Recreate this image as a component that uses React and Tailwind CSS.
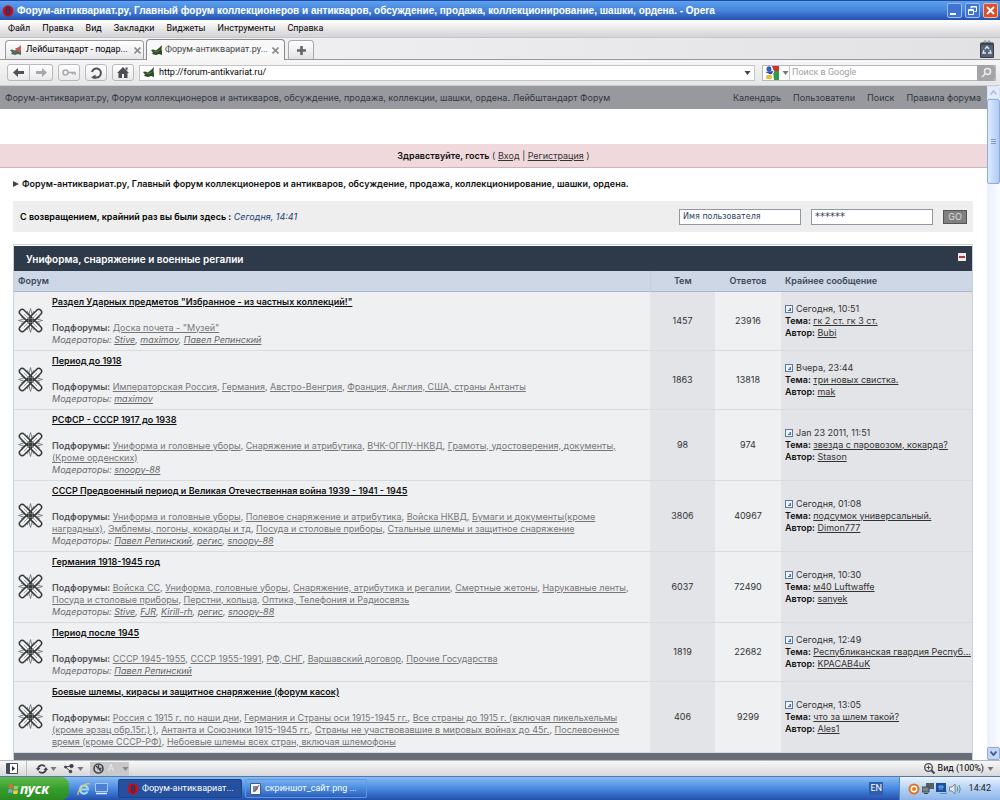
import { useState } from "react";

const title = "Форум-антиквариат.ру, Главный форум коллекционеров и антикваров, обсуждение, продажа, коллекционирование, шашки, ордена.";

const menu = ["Файл", "Правка", "Вид", "Закладки", "Виджеты", "Инструменты", "Справка"];

const forums = [
  {
    name: 'Раздел Ударных предметов "Избранное - из частных коллекций!"',
    subs: ['Доска почета - "Музей"'],
    mods: ["Stive", "maximov", "Павел Репинский"],
    topics: 1457,
    replies: 23916,
    last: { date: "Сегодня, 10:51", topic: "гк 2 ст. гк 3 ст.", author: "Bubi" },
  },
  {
    name: "Период до 1918",
    subs: ["Императорская Россия", "Германия", "Австро-Венгрия", "Франция, Англия, США, страны Антанты"],
    mods: ["maximov"],
    topics: 1863,
    replies: 13818,
    last: { date: "Вчера, 23:44", topic: "три новых свистка.", author: "mak" },
  },
  {
    name: "РСФСР - СССР 1917 до 1938",
    subs: ["Униформа и головные уборы", "Снаряжение и атрибутика", "ВЧК-ОГПУ-НКВД", "Грамоты, удостоверения, документы, (Кроме орденских)"],
    mods: ["snoopy-88"],
    topics: 98,
    replies: 974,
    last: { date: "Jan 23 2011, 11:51", topic: "звезда с паровозом, кокарда?", author: "Stason" },
  },
  {
    name: "СССР Предвоенный период и Великая Отечественная война 1939 - 1941 - 1945",
    subs: ["Униформа и головные уборы", "Полевое снаряжение и атрибутика", "Войска НКВД", "Бумаги и документы(кроме наградных)", "Эмблемы, погоны, кокарды и тд", "Посуда и столовые приборы", "Стальные шлемы и защитное снаряжение"],
    mods: ["Павел Репинский", "регис", "snoopy-88"],
    topics: 3806,
    replies: 40967,
    last: { date: "Сегодня, 01:08", topic: "подсумок универсальный.", author: "Dimon777" },
  },
  {
    name: "Германия 1918-1945 год",
    subs: ["Войска СС", "Униформа, головные уборы", "Снаряжение, атрибутика и регалии", "Смертные жетоны", "Нарукавные ленты", "Посуда и столовые приборы", "Перстни, кольца", "Оптика, Телефония и Радиосвязь"],
    mods: ["Stive", "FJR", "Kirill-rh", "регис", "snoopy-88"],
    topics: 6037,
    replies: 72490,
    last: { date: "Сегодня, 10:30", topic: "м40 Luftwaffe", author: "sanyek" },
  },
  {
    name: "Период после 1945",
    subs: ["СССР 1945-1955", "СССР 1955-1991", "РФ, СНГ", "Варшавский договор", "Прочие Государства"],
    mods: ["Павел Репинский"],
    topics: 1819,
    replies: 22682,
    last: { date: "Сегодня, 12:49", topic: "Республиканская гвардия Респуб...", author: "KPACAB4uK" },
  },
  {
    name: "Боевые шлемы, кирасы и защитное снаряжение (форум касок)",
    subs: ["Россия с 1915 г. по наши дни", "Германия и Страны оси 1915-1945 гг.", "Все страны до 1915 г. (включая пикельхельмы (кроме эрзац обр.15г.) )", "Антанта и Союзники 1915-1945 гг.", "Страны не участвовавшие в мировых войнах до 45г.", "Послевоенное время (кроме СССР-РФ)", "Небоевые шлемы всех стран, включая шлемофоны"],
    mods: [],
    topics: 406,
    replies: 9299,
    last: { date: "Сегодня, 13:05", topic: "что за шлем такой?", author: "Ales1" },
  },
];

function OperaIcon() {
  return (
    <svg width="12" height="12" viewBox="0 0 12 12" className="shrink-0">
      <ellipse cx="6" cy="6" rx="5.4" ry="5.8" fill="#c3111d" />
      <ellipse cx="6" cy="6" rx="2" ry="4" fill="#2c3a76" stroke="#7c0810" strokeWidth="0.6" />
    </svg>
  );
}

function BirdIcon({ red }) {
  return (
    <svg width="12" height="11" viewBox="0 0 12 11" className="shrink-0">
      <path d="M0 5L2 4.500L5 5.500L8 3L11 0L10.500 4L11 7L11 10L8 9L5 10L1 9L2 7.500Z" fill={red ? "#4c6a5c" : "#2c4a24"} />
      <path d="M3 6.500L6 7L9 5" stroke="#5d7a48" fill="none" />
      {red && <path d="M5 3.500L11 1.500L10 7L7 6Z" fill="#cf5454" />}
    </svg>
  );
}

function ForumStar() {
  return (
    <svg width="25" height="25" viewBox="0 0 25 25" fill="none" className="mx-auto block">
      <g stroke="#74787a" strokeWidth="0.9">
        <path d="M12.500 0.500L14 6L12.500 10L11 6ZM12.500 24.500L14 19L12.500 15L11 19Z" />
        <path d="M0.500 12.500L6 11L10 12.500L6 14ZM24.500 12.500L19 11L15 12.500L19 14Z" />
        <path d="M9 3L12.500 9L16 3M9 22L12.500 16L16 22M3 9L9 12.500L3 16M22 9L16 12.500L22 16" />
      </g>
      <g stroke="#34393a" strokeWidth="1.500">
        <rect x="-2" y="9.700" width="29" height="5.600" rx="2.800" transform="rotate(45 12.500 12.500)" />
        <rect x="-2" y="9.700" width="29" height="5.600" rx="2.800" transform="rotate(-45 12.500 12.500)" />
      </g>
      <path d="M6 6L19 19M19 6L6 19" stroke="#8b8f90" strokeWidth="0.800" />
      <circle cx="12.500" cy="12.500" r="2.200" fill="#3d4332" />
    </svg>
  );
}

function LastPostIcon() {
  return (
    <svg width="8" height="8" viewBox="0 0 8 8" className="mr-[3px] inline-block align-[-1px]">
      <rect x="0.5" y="0.5" width="7" height="7" fill="#eef3f9" stroke="#5d7898" />
      <path d="M6 3V6H3V5H4.500V3Z" fill="#4b6ea8" />
    </svg>
  );
}

function Caret({ className = "text-[#777]" }) {
  return (
    <svg width="7" height="4" viewBox="0 0 7 4" className={`shrink-0 ${className}`}>
      <path d="M0.500 0H6.500L3.500 4Z" fill="currentColor" />
    </svg>
  );
}

function CloseTab() {
  return (
    <button type="button" aria-label="Закрыть вкладку" className="px-[2px]">
      <svg width="7" height="7" viewBox="0 0 7 7" stroke="#8c8c90" strokeWidth="1.600">
        <path d="M0.500 0.500L6.500 6.500M6.500 0.500L0.500 6.500" />
      </svg>
    </button>
  );
}

function ToolButton({ label, children, className = "" }) {
  return (
    <button type="button" aria-label={label} className={`flex h-[17px] items-center justify-center rounded-[3px] border border-[#b9b9bb] bg-linear-to-b from-white to-[#e9e9eb] ${className}`}>
      {children}
    </button>
  );
}

function TitleBar() {
  return (
    <header className="flex h-5 shrink-0 items-center gap-[3px] border-t border-[#1d4ea8] bg-linear-to-b from-[#5e9ff0] via-[#4585da] to-[#2650b0] pr-[2px] pl-[2px]">
      <OperaIcon />
      <h1 className="min-w-0 flex-1 truncate font-['Liberation_Sans',Arial,sans-serif] text-[10px] font-bold text-white">{title} - Opera</h1>
      <div className="flex gap-[3px]">
        <button type="button" aria-label="Свернуть" className="flex h-[15px] w-[15px] items-end rounded-[2px] border border-[#9dbcf0] bg-[#3f74d2] p-[2px]">
          <span className="h-[2px] w-[6px] bg-white" />
        </button>
        <button type="button" aria-label="Восстановить" className="flex h-[15px] w-[15px] items-center justify-center rounded-[2px] border border-[#9dbcf0] bg-[#3f74d2]">
          <svg width="9" height="9" viewBox="0 0 9 9" fill="none" stroke="#fff">
            <path d="M3 2.500V0.500H8.500V5.500H6.500M3 1H8" />
            <path d="M0.500 3.500H5.500V8.500H0.500ZM0.500 4.500H5.500" />
          </svg>
        </button>
        <button type="button" aria-label="Закрыть" className="flex h-[15px] w-[15px] items-center justify-center rounded-[2px] border border-[#f0b8a8] bg-[#d9512c]">
          <svg width="9" height="9" viewBox="0 0 9 9" stroke="#fff" strokeWidth="1.800">
            <path d="M1 1L8 8M8 1L1 8" />
          </svg>
        </button>
      </div>
    </header>
  );
}

function Tabs() {
  return (
    <div className="flex h-[22px] shrink-0 items-end border-b border-[#98989c] bg-linear-to-r from-[#f4f4f5] to-[#e2e2e5] pl-[5px]">
      <div className="flex h-[19px] w-[139px] items-center gap-1 rounded-t-[4px] border border-b-0 border-[#9a9a9e] bg-linear-to-b from-white to-[#e6e6e8] px-1">
        <BirdIcon red />
        <button type="button" className="flex-1 text-left whitespace-nowrap">Лейбштандарт - подар...</button>
        <CloseTab />
      </div>
      <div className="-mb-px ml-[2px] flex h-[21px] w-[139px] items-center gap-[2px] rounded-t-[4px] border border-b-0 border-[#8a8a8e] bg-[#f8f8f9] px-1">
        <BirdIcon />
        <button type="button" className="flex-1 text-left whitespace-nowrap text-[#444]">Форум-антиквариат.ру...</button>
        <CloseTab />
      </div>
      <button type="button" aria-label="Новая вкладка" className="ml-[3px] flex h-[19px] w-[26px] items-center justify-center rounded-t-[4px] border border-b-0 border-[#a8a8ac] bg-linear-to-b from-white to-[#e2e2e4]">
        <svg width="9" height="9" viewBox="0 0 9 9" stroke="#63656d" strokeWidth="2.600">
          <path d="M4.500 0V9M0 4.500H9" />
        </svg>
      </button>
      <button type="button" aria-label="Закрытые вкладки" className="mr-[6px] mb-px ml-auto">
        <svg width="14" height="18" viewBox="0 0 14 18" fill="none">
          <path d="M3 3L5 0.500L7 3L9 0.500L11 3" fill="#d8ece4" stroke="#6f8f92" />
          <path d="M0.500 4H13.500V17.500H0.500Z" fill="#586274" stroke="#363e4c" />
          <path d="M0.500 3.500H13.500" stroke="#363e4c" strokeWidth="2" />
          <path d="M5 9L7 6.500L9 9M10 10L11 13H8M6 13H3L4 10" stroke="#dfe5ee" strokeWidth="1.300" />
        </svg>
      </button>
    </div>
  );
}

function Toolbar() {
  return (
    <div className="flex h-[26px] shrink-0 items-center border-b border-[#cfcfcf] bg-linear-to-b from-[#f6f6f7] to-[#e6e6e8] pr-1 pl-[7px]">
      <ToolButton label="Назад" className="w-[23px] rounded-r-none">
        <svg width="11" height="9" viewBox="0 0 11 9" fill="#505258"><path d="M0 4.500L5 0V3H11V6H5V9Z" /></svg>
      </ToolButton>
      <ToolButton label="Вперед" className="w-[23px] rounded-l-none border-l-0">
        <svg width="11" height="9" viewBox="0 0 11 9" fill="#a6a8ac"><path d="M11 4.500L6 0V3H0V6H6V9Z" /></svg>
      </ToolButton>
      <ToolButton label="Пароль" className="ml-[5px] w-[22px]">
        <svg width="14" height="7" viewBox="0 0 14 7" fill="none" stroke="#a6a8ac" strokeWidth="1.500"><circle cx="3.500" cy="3.500" r="2.500" /><path d="M6 3.500H13V6M10.500 3.500V5.500" /></svg>
      </ToolButton>
      <ToolButton label="Обновить" className="ml-[5px] w-[22px]">
        <svg width="13" height="12" viewBox="0 0 13 12" fill="none" stroke="#4c4e54" strokeWidth="2"><path d="M2 5A4.500 4.500 0 1 1 6.500 10.500H3" /><path d="M5.500 7.500V12L1 10.500Z" fill="#4c4e54" stroke="none" /></svg>
      </ToolButton>
      <ToolButton label="Домой" className="ml-[5px] w-[22px]">
        <svg width="12" height="11" viewBox="0 0 12 11" fill="#4c4e54"><path d="M6 0L12 6H10.500V11H7V7H5V11H1.500V6H0ZM8.500 0.500H10.500V3.500L8.500 2Z" /></svg>
      </ToolButton>
      <div className="ml-[5px] flex h-4 flex-1 items-center gap-1 border border-[#c4c4c6] bg-white px-[3px]">
        <BirdIcon />
        <input aria-label="Адрес" defaultValue="http://forum-antikvariat.ru/" className="min-w-0 flex-1 outline-none" />
        <Caret className="text-[#444]" />
      </div>
      <div className="ml-[7px] flex h-4 w-[234px] items-center border border-[#b8b8ba] bg-white">
        <button type="button" aria-label="Поисковая система" className="flex h-full w-[27px] items-center gap-[3px] border-r border-[#c8c8ca] pl-[2px]">
          <svg width="14" height="14" viewBox="0 0 14 14" className="shrink-0">
            <path d="M7 0H14V5H8Z" fill="#d2322c" /><path d="M8 5H14V14H9Z" fill="#2f9a48" />
            <ellipse cx="4" cy="3" rx="2.500" ry="2.800" fill="#2c5cc0" /><path d="M0 6L8 5L7 9Z" fill="#2456a8" />
            <ellipse cx="4" cy="11" rx="3" ry="2.300" fill="#efbb3d" /><path d="M6 0L9 6L6 9" stroke="#fff" fill="none" />
          </svg>
          <Caret />
        </button>
        <input type="search" aria-label="Поиск" placeholder="Поиск в Google" className="min-w-0 flex-1 pl-[2px] outline-none placeholder:text-[#a0a0a0]" />
        <button type="button" aria-label="Найти" className="flex h-4 w-[18px] items-center justify-center rounded-r-[3px] bg-[#a5a5a7]">
          <svg width="11" height="11" viewBox="0 0 11 11" fill="none" stroke="#eee" strokeWidth="1.500"><circle cx="6.500" cy="4.500" r="3" /><path d="M4.500 6.500L1 10" /></svg>
        </button>
      </div>
    </div>
  );
}

function LinkList({ items, className }) {
  return items.map((item, i) => (
    <span key={item}>
      <a href="#" className={`underline ${className}`}>{item}</a>
      {i < items.length - 1 && ", "}
    </span>
  ));
}

function ForumRow({ forum }) {
  return (
    <tr className="border-b border-[#d9dcdf]">
      <td className="bg-[#eff0f2]"><ForumStar /></td>
      <td className="bg-[#eff0f2] pt-1 pr-2 pb-1 pl-[5px] align-top text-[#6c6c6c]">
        <h3 className="mb-[14px] font-semibold text-[#111]"><a href="#" className="underline">{forum.name}</a></h3>
        <p><b className="font-semibold text-[#555]">Подфорумы:</b> <LinkList items={forum.subs} className="text-[#777]" /></p>
        {forum.mods.length > 0 && (
          <p className="italic">Модераторы: <LinkList items={forum.mods} className="text-[#666]" /></p>
        )}
      </td>
      <td className="bg-[#e3e4e7] text-center">{forum.topics}</td>
      <td className="bg-[#eff0f2] text-center">{forum.replies}</td>
      <td className="bg-[#e3e4e7] pl-1 whitespace-nowrap">
        <p><LastPostIcon />{forum.last.date}</p>
        <p><b className="font-semibold text-[#111]">Тема:</b> <a href="#" className="underline">{forum.last.topic}</a></p>
        <p><b className="font-semibold text-[#111]">Автор:</b> <a href="#" className="underline">{forum.last.author}</a></p>
      </td>
    </tr>
  );
}

function ForumTable() {
  const [open, setOpen] = useState(true);

  return (
    <section className="mt-3 mr-[14px] mb-4 ml-[13px] border border-[#c9d2dd] pt-px">
      <div className="flex h-[25px] items-center justify-between bg-[#2e3a49] pr-[6px] pl-3">
        <h2 className="text-[10px] font-semibold text-white">Униформа, снаряжение и военные регалии</h2>
        <button type="button" aria-label="Свернуть раздел" onClick={() => setOpen(!open)} className="mb-1 flex h-2 w-2 items-center justify-center bg-[#f7e6e6]">
          <span className="h-[2px] w-[6px] bg-[#a04040]" />
        </button>
      </div>
      {open && (
        <table className="w-full table-fixed border-collapse leading-[12px] text-[#333]">
          <colgroup>
            <col className="w-[33px]" />
            <col />
            <col className="w-[65px]" />
            <col className="w-[66px]" />
            <col className="w-[191px]" />
          </colgroup>
          <thead>
            <tr className="h-5 border-b border-[#a9b8cc] bg-[#cdd7e6] text-[#3c4a5c] *:font-semibold">
              <th colSpan={2} className="border-r border-[#c3cedf] pl-1 text-left">Форум</th>
              <th>Тем</th>
              <th>Ответов</th>
              <th className="pl-1 text-left">Крайнее сообщение</th>
            </tr>
          </thead>
          <tbody>
            {forums.map((forum) => <ForumRow key={forum.name} forum={forum} />)}
          </tbody>
        </table>
      )}
      <div className="h-2 bg-[#676e78]" />
    </section>
  );
}

function Page() {
  return (
    <main className="min-w-0 flex-1 overflow-hidden bg-white font-['Inter',Arial,sans-serif] leading-[12px]">
      <nav className="flex h-[23px] items-center gap-3 bg-[#97999f] pr-[6px] pl-[5px] text-[#33363c]">
        <a href="#" className="flex-1 truncate">Форум-антиквариат.ру, Форум коллекционеров и антикваров, обсуждение, продажа, коллекции, шашки, ордена. Лейбштандарт Форум</a>
        <a href="#">Календарь</a>
        <a href="#">Пользователи</a>
        <a href="#">Поиск</a>
        <a href="#">Правила форума</a>
      </nav>
      <div className="mt-[35px] flex h-6 items-center justify-center border-b border-[#d0b4b8] bg-[#f0d9dc] text-[#333]">
        <p><b className="font-semibold text-[#111]">Здравствуйте, гость</b> ( <a href="#" className="underline">Вход</a> | <a href="#" className="underline">Регистрация</a> )</p>
      </div>
      <p className="mt-[10px] flex items-center gap-[3px] pl-[13px] font-semibold text-[#111]">
        <svg width="6" height="6" viewBox="0 0 6 6" fill="#444"><path d="M0 0L6 3L0 6Z" /></svg>
        {title}
      </p>
      <form className="mt-[11px] mr-[14px] ml-[13px] flex h-[31px] items-center bg-[#eeeeee] pr-[6px] pl-[7px]" onSubmit={(e) => e.preventDefault()}>
        <p className="flex-1"><b className="font-semibold">С возвращением, крайний раз вы были здесь :</b> <i className="text-[#22397a]">Сегодня, 14:41</i></p>
        <input aria-label="Имя пользователя" defaultValue="Имя пользователя" className="h-4 w-[122px] border border-[#8f98a3] bg-white px-[3px] font-['DejaVu_Sans',sans-serif] text-[8px] text-[#2d3d5c]" />
        <input aria-label="Пароль" defaultValue="******" className="ml-[10px] h-4 w-[122px] border border-[#8f98a3] bg-white px-[3px] font-['DejaVu_Sans',sans-serif] text-[10px] text-[#2d3d5c]" />
        <button type="submit" className="ml-[10px] h-[14px] w-6 border border-[#555] bg-[#808080] text-center leading-none text-[#ddd]">GO</button>
      </form>
      <ForumTable />
    </main>
  );
}

function Scrollbar() {
  return (
    <div className="flex w-[13px] shrink-0 flex-col bg-linear-to-r from-[#e9f0fc] to-[#fbfcff]">
      <button type="button" aria-label="Вверх" className="flex h-[13px] items-center justify-center rounded-[2px] border border-[#d5e0f4] bg-[#e4edfb]">
        <svg width="7" height="5" viewBox="0 0 7 5" fill="none" stroke="#a9b9d4" strokeWidth="1.500"><path d="M0.500 4.500L3.500 1L6.500 4.500" /></svg>
      </button>
      <div className="flex h-[85px] flex-col items-center justify-center gap-px rounded-[2px] border border-[#8fabd8] bg-linear-to-r from-[#dceafd] to-[#b0cbf3]">
        <span className="h-px w-[5px] bg-[#7d9dcb]" />
        <span className="h-px w-[5px] bg-[#7d9dcb]" />
        <span className="h-px w-[5px] bg-[#7d9dcb]" />
      </div>
      <button type="button" aria-label="Вниз" className="mt-auto flex h-[13px] items-center justify-center rounded-[2px] border border-[#8fabd8] bg-[#c3d6f8]">
        <svg width="7" height="5" viewBox="0 0 7 5" fill="none" stroke="#42587d" strokeWidth="1.800"><path d="M0.500 0.500L3.500 4L6.500 0.500" /></svg>
      </button>
    </div>
  );
}

function StatusBar() {
  return (
    <div className="flex h-4 shrink-0 items-center border-t border-[#b8b8b8] bg-linear-to-b from-[#f8f8f9] to-[#d8d8dc] pr-[6px] pl-[6px]">
      <button type="button" aria-label="Панели" className="mr-2">
        <svg width="12" height="11" viewBox="0 0 12 11"><path d="M0.500 0.500H11.500V10.500H0.500Z" fill="#fff" stroke="#454a5c" /><path d="M1 1H4V10H1Z" fill="#454a5c" /><path d="M6 3L9 5.500L6 8Z" fill="#222" /></svg>
      </button>
      <span className="h-4 w-px bg-[#bbb]" />
      <button type="button" aria-label="Синхронизация" className="ml-[9px] flex items-center gap-[2px]">
        <svg width="12" height="10" viewBox="0 0 12 10" fill="none" stroke="#3f424a" strokeWidth="1.800"><path d="M2 5A4 4 0 0 1 9 2.500M10 5A4 4 0 0 1 3 7.500" /><path d="M0 4H4.500L2 7ZM12 6H7.500L10 3Z" fill="#3f424a" stroke="none" /></svg>
        <Caret />
      </button>
      <button type="button" aria-label="Unite" className="ml-[7px] flex items-center gap-[3px]">
        <svg width="10" height="10" viewBox="0 0 10 10" fill="#3f424a" stroke="#3f424a"><path d="M1.500 3L8 2M1.500 3L7 8" fill="none" /><circle cx="1.500" cy="3" r="1" /><circle cx="7.500" cy="2" r="1.700" /><circle cx="6.500" cy="7.500" r="1.300" /></svg>
        <Caret />
      </button>
      <button type="button" aria-label="Turbo" className="ml-[6px] flex h-[14px] w-[39px] items-center gap-1 bg-[#c9c9cb] pl-[3px] text-[#eee]">
        <svg width="11" height="11" viewBox="0 0 11 11" fill="none" stroke="#42454e" strokeWidth="1.600"><circle cx="5.500" cy="5.500" r="4.500" /><path d="M3 3L8 8M5.500 2V5.500H8.500" strokeWidth="1.300" /></svg>
        A
        <Caret className="ml-auto text-[#888]" />
      </button>
      <button type="button" className="ml-auto flex items-center gap-[3px]">
        <svg width="11" height="11" viewBox="0 0 11 11" fill="none" stroke="#42454e"><circle cx="4.500" cy="4.500" r="3.800" strokeWidth="1.300" /><path d="M2.500 4.500H6.500M4.500 2.500V6.500" /><path d="M7.500 7.500L10.500 10.500" strokeWidth="2" /></svg>
        Вид (100%)
        <Caret />
      </button>
    </div>
  );
}

function Taskbar() {
  return (
    <footer className="flex h-6 shrink-0 items-stretch border-t border-[#5577a8] bg-linear-to-b from-[#86bcf5] via-[#4a8ae0] to-[#2450ac] text-white">
      <button type="button" className="flex w-[69px] items-center gap-px rounded-r-[8px] bg-linear-to-b from-[#5fbb4c] via-[#35a02e] to-[#2b8a22] pl-2 font-['Noto_Sans',sans-serif] text-[14px] leading-none font-bold italic">
        <svg width="11" height="12" viewBox="0 0 11 12"><path d="M1 2Q3 0 5 2L4.500 5.500Q2.500 4.500 0.500 5.500Z" fill="#e8683c" /><path d="M6 2.500Q8 3.500 10.500 2.500L10 6Q7.500 7 5.500 6Z" fill="#8fd06a" /><path d="M0.500 6.500Q2.500 5.500 4.500 6.500L4 10Q2 9 0 10Z" fill="#76a9ee" /><path d="M5.500 7Q7.500 8 10 7L9.500 10.500Q7 11.500 5 10.500Z" fill="#f4cf4f" /></svg>
        пуск
      </button>
      <div className="flex w-[49px] items-center gap-1 pl-2">
        <button type="button" aria-label="Internet Explorer">
          <svg width="14" height="14" viewBox="0 0 14 14" fill="none"><path d="M10.500 9.500A4 4 0 1 1 11 7.500H4" stroke="#9fd8fb" strokeWidth="2.200" /><path d="M1 13C0 8 9 0 13 2" stroke="#e8c85a" strokeWidth="1.300" /></svg>
        </button>
        <button type="button" aria-label="Рабочий стол">
          <svg width="13" height="12" viewBox="0 0 13 12"><path d="M0.500 0.500H12.500V8.500H0.500Z" fill="#4d80d4" stroke="#a9c8f2" /><path d="M1 10.500H12" stroke="#dfeafb" strokeWidth="1.500" /></svg>
        </button>
      </div>
      <button type="button" className="my-[2px] flex w-[124px] items-center gap-[3px] rounded-[2px] border border-[#1c4488] bg-[#24509f] px-2 whitespace-nowrap">
        <OperaIcon />
        Форум-антиквариат...
      </button>
      <button type="button" className="my-[2px] ml-[3px] flex w-[122px] items-center gap-1 rounded-[2px] border border-[#5a98e6] px-1 whitespace-nowrap">
        <svg width="11" height="12" viewBox="0 0 11 12" className="shrink-0"><path d="M0.500 0.500H10.500V11.500H0.500Z" fill="#f3f5f8" stroke="#44597c" /><path d="M3 3H8V6L5 9H3Z" fill="#7089b0" /><path d="M9 2L5 8" stroke="#b44" /></svg>
        скриншот_сайт.png ...
      </button>
      <span className="my-[5px] ml-auto flex items-center bg-[#2f5cab] px-[1px]">EN</span>
      <div className="ml-4 flex w-[101px] items-center gap-[2px] border-l border-[#5d83bd] bg-linear-to-b from-[#eaf3fd] via-[#b6d2f5] to-[#8db5ea] pl-2 text-[#222]">
        <svg width="12" height="12" viewBox="0 0 12 12" fill="none"><circle cx="6" cy="6" r="5.500" fill="#e2731f" /><circle cx="6" cy="6" r="2.700" stroke="#fff" strokeWidth="1.500" /></svg>
        <svg width="12" height="11" viewBox="0 0 12 11"><path d="M4 0H12V6H4Z" fill="#565f69" /><path d="M0 4H7V9H0Z" fill="#7c858e" stroke="#3c444c" /><path d="M2 10.500H6" stroke="#444" /></svg>
        <svg width="11" height="11" viewBox="0 0 11 11"><path d="M0 0H10V9H0Z" fill="#1c4f9e" /><path d="M2 4H8M4 2V7M6 2V7" stroke="#6fb0e8" /><path d="M4 10.500H11V7" stroke="#6a8ba8" fill="none" /></svg>
        <svg width="13" height="12" viewBox="0 0 13 12" fill="none"><path d="M0.500 4H3L6 1V11L3 8H0.500Z" fill="#e8edf2" stroke="#75808c" /><path d="M8 3.500Q9.500 6 8 8.500M10 2Q12.500 6 10 10" stroke="#4f9a64" /></svg>
        <time className="mr-[9px] ml-auto">14:42</time>
      </div>
    </footer>
  );
}

export default function App() {
  return (
    <div className="flex h-screen flex-col overflow-hidden bg-[#eee] font-['Roboto',Arial,sans-serif] text-[9px] text-black">
      <TitleBar />
      <nav className="flex h-[18px] shrink-0 items-center gap-3 border-b border-[#c6c6c8] bg-linear-to-b from-white to-[#d3d3d5] pl-2">
        {menu.map((item) => <button key={item} type="button">{item}</button>)}
      </nav>
      <Tabs />
      <Toolbar />
      <div className="flex min-h-0 flex-1">
        <Page />
        <Scrollbar />
      </div>
      <StatusBar />
      <Taskbar />
    </div>
  );
}
